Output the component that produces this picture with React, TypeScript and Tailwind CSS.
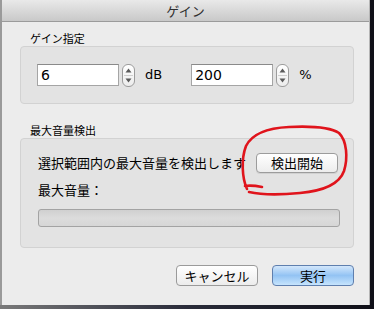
import React from "react";

const jp = { fontFamily: '"Noto Sans CJK JP", "Noto Sans", sans-serif' };
const latin = { fontFamily: '"DejaVu Sans", "Liberation Sans", sans-serif' };

const Stepper = () => (
  <div className="w-[13px] h-[23px] rounded-[6px] border border-[#9c9c9c] bg-gradient-to-b from-white to-[#ececec] flex flex-col items-center justify-between py-[3px]">
    <svg width="7" height="5" viewBox="0 0 7 5">
      <path d="M3.5 0.5 L6.5 4.5 L0.5 4.5 Z" fill="#5a5a5a" />
    </svg>
    <div className="w-[9px] h-px bg-[#cfcfcf]" />
    <svg width="7" height="5" viewBox="0 0 7 5">
      <path d="M0.5 0.5 L6.5 0.5 L3.5 4.5 Z" fill="#5a5a5a" />
    </svg>
  </div>
);

const NumberField = ({ value, unit }: { value: string; unit: string }) => (
  <div className="flex items-center">
    <div
      className="w-[82px] h-[22px] bg-white border border-[#a5a5a5] border-t-[#8a8a8a] pl-[3px] text-[14px] leading-[20px] text-black"
      style={latin}
    >
      {value}
    </div>
    <div className="ml-[3px]">
      <Stepper />
    </div>
    <span className="ml-[10px] text-[13px] text-black" style={latin}>
      {unit}
    </span>
  </div>
);

const App = () => {
  return (
    <div className="relative w-[374px] h-[309px] overflow-hidden bg-gradient-to-r from-[#7a7a7a] via-[#2a2c3a] to-[#101018]">
      <div className="w-[370px] h-[305px] bg-[#ececec] border-l-2 border-l-[#9a9a9a] border-r border-r-[#b5b5b5] flex flex-col">
        {/* title bar */}
        <div
          className="h-[22px] shrink-0 bg-gradient-to-b from-[#e9e9e9] to-[#c9c9c9] border-b border-[#9b9b9b] flex items-center justify-center text-[13px] text-[#2e2e2e]"
          style={jp}
        >
          ゲイン
        </div>

        <div className="pl-[18px] pr-[15px]" style={jp}>
          {/* gain group */}
          <div className="mt-[9px] h-[14px] pl-[10px] text-[11px] leading-[14px] text-black">ゲイン指定</div>
          <div className="mt-px h-[58px] rounded-[4px] border border-[#d2d2d2] bg-[#e3e3e3] flex items-center pl-[16px] gap-[29px]">
            <NumberField value="6" unit="dB" />
            <NumberField value="200" unit="%" />
          </div>

          {/* peak detect group */}
          <div className="mt-[19px] h-[14px] pl-[10px] text-[11px] leading-[14px] text-black">最大音量検出</div>
          <div className="mt-px h-[110px] rounded-[4px] border border-[#d2d2d2] bg-[#e3e3e3] pl-[17px] pr-[15px] pt-[14px]">
            <div className="flex items-center justify-between h-[20px]">
              <span className="text-[13px] text-black">選択範囲内の最大音量を検出します</span>
              <button className="w-[82px] h-[20px] rounded-[4px] border border-[#9c9c9c] bg-gradient-to-b from-white to-[#ededed] text-[13px] leading-[18px] text-black shadow-[0_1px_0_rgba(0,0,0,0.08)]">
                検出開始
              </button>
            </div>
            <div className="mt-[10px] h-[14px] text-[13px] leading-[14px] text-black">最大音量：</div>
            <div className="mt-[12px] w-[302px] h-[18px] rounded-[3px] border border-[#a3a3a3] bg-gradient-to-b from-[#d0d0d0] via-[#dcdcdc] to-[#d6d6d6]" />
          </div>

          {/* footer buttons */}
          <div className="mt-[17px] flex justify-end gap-[14px]">
            <button className="w-[82px] h-[21px] rounded-[4px] border border-[#9a9a9a] bg-gradient-to-b from-white to-[#ececec] text-[13px] leading-[19px] text-black">
              キャンセル
            </button>
            <button className="w-[82px] h-[21px] rounded-[4px] border border-[#5f7fae] bg-gradient-to-b from-[#d3e7fb] via-[#93c3f3] to-[#c6e4fd] text-[13px] leading-[19px] text-black">
              実行
            </button>
          </div>
        </div>
      </div>

      {/* hand-drawn red circle */}
      <svg className="absolute inset-0 pointer-events-none" width="374" height="309" viewBox="0 0 374 309">
        <path
          d="M247 189 C242 178 241 159 246 146 C252 134 267 128 289 127 C310 126 330 127 339 133 C347 141 348 158 344 171 C339 185 322 191 300 193 C280 195 262 195 249 192 M245 186 C251 185 257 186 262 187"
          fill="none"
          stroke="#e0141c"
          strokeWidth="2.6"
          strokeLinecap="round"
          strokeLinejoin="round"
        />
      </svg>
    </div>
  );
};

export default App;
